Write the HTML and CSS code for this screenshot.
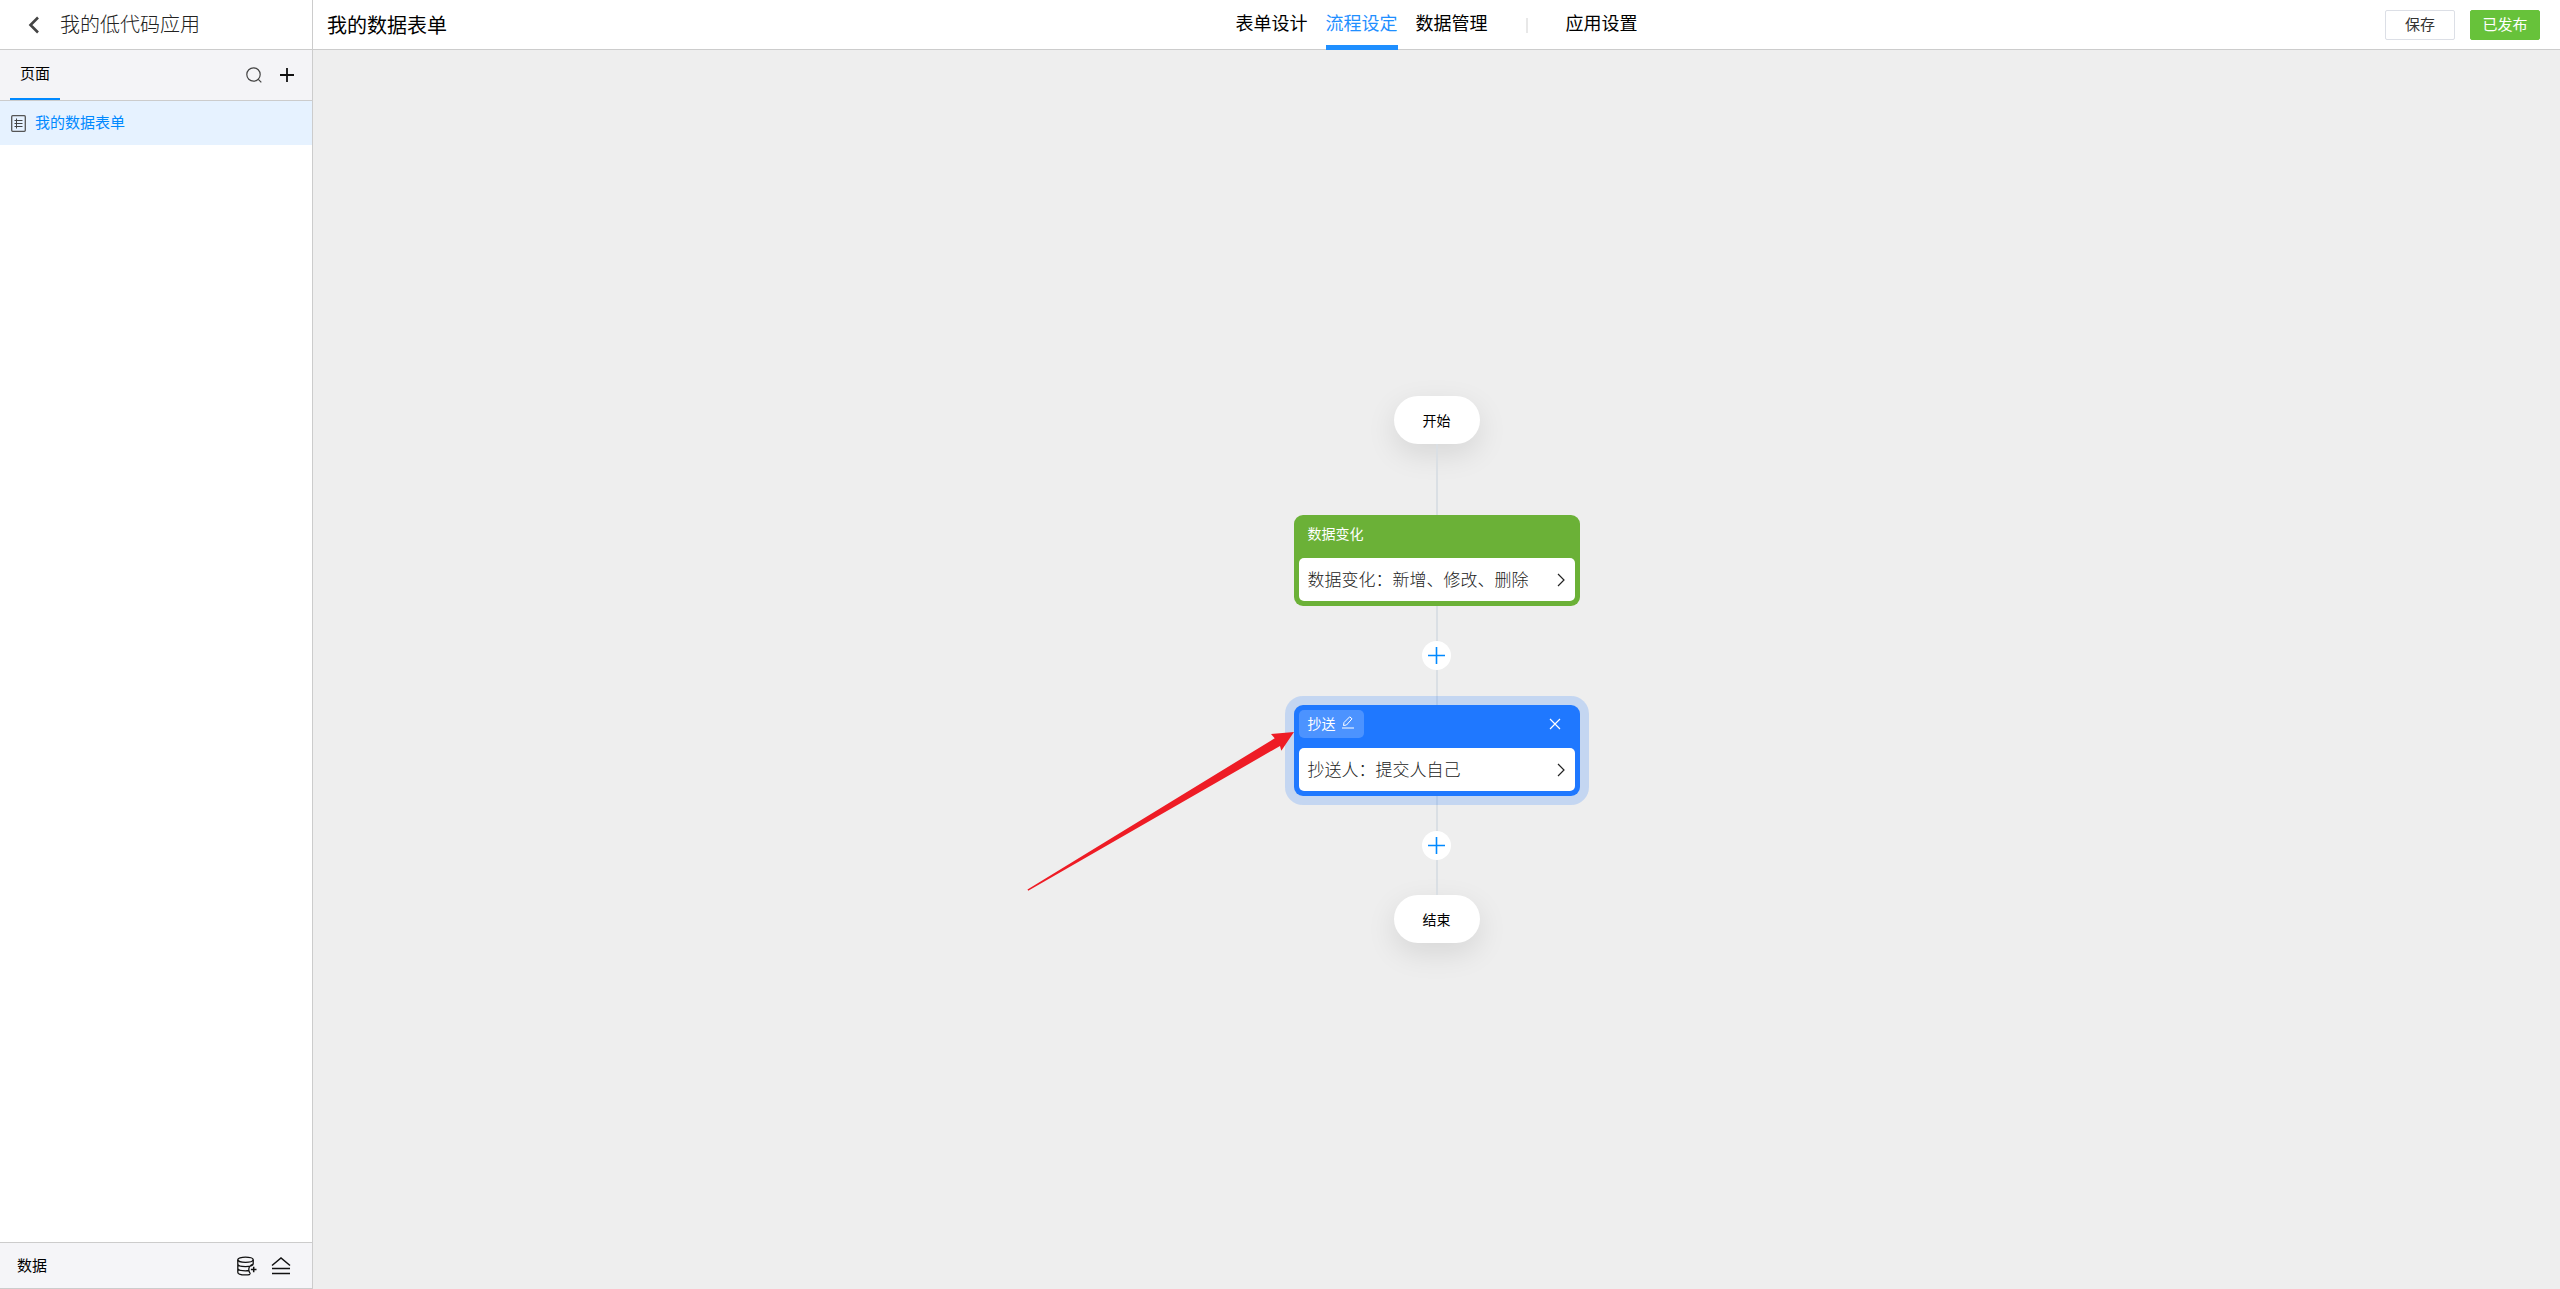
FILE: index.html
```html
<!DOCTYPE html>
<html lang="zh-CN">
<head>
    <meta charset="UTF-8">
    <title>我的低代码应用</title>
    <link rel="stylesheet" href="styles.css">
</head>
<body>
<div class="app">
    <aside class="sidebar">
        <div class="app-title">
            <button class="icon-btn" aria-label="返回">
                <svg width="16" height="18" viewBox="0 0 16 18"><path d="M12 1.500 4.500 9l7.500 7.500" stroke="#444" stroke-width="2.600"/></svg>
            </button>
            <span>我的低代码应用</span>
        </div>
        <div class="side-tabs">
            <a class="side-tab" href="#">页面</a>
            <div class="side-tools">
                <button class="icon-btn" aria-label="搜索">
                    <svg width="16" height="16" viewBox="0 0 16 16"><circle cx="7.500" cy="7.500" r="6.700" stroke="#444" stroke-width="1.200"/><path d="m12.300 12.300 3 3" stroke="#444" stroke-width="1.200"/></svg>
                </button>
                <button class="icon-btn" aria-label="新增">
                    <svg width="16" height="16" viewBox="0 0 16 16"><path d="M8 1v14M1 8h14" stroke="#111" stroke-width="1.800"/></svg>
                </button>
            </div>
        </div>
        <a class="page-item" href="#">
            <svg width="15" height="17" viewBox="0 0 15 17"><rect x=".7" y=".7" width="13.600" height="15.600" rx="1" stroke="#555" stroke-width="1.300"/><path d="M5.500 3.500v10M3.500 5.500h8M3.500 8.500h8M3.500 11.500h8" stroke="#444"/></svg>
            <span class="label">我的数据表单</span>
        </a>
        <div class="data-bar">
            <span class="label">数据</span>
            <div class="side-tools">
                <button class="icon-btn" aria-label="新增数据源">
                    <svg width="20" height="20" viewBox="0 0 20 20"><g stroke="#111" stroke-width="1.300"><ellipse cx="8.500" cy="3.800" rx="7.700" ry="2.600"/><path d="M.8 3.800v12.400c0 1.500 3.400 2.700 7.700 2.700 1.800 0 3.400-.2 4.700-.6M.8 8c0 1.500 3.400 2.600 7.700 2.600s7.700-1.100 7.700-2.600V3.800M.8 12.200c0 1.500 3.400 2.600 7.700 2.600 1.200 0 2.300-.1 3.300-.3M16.200 8c-3 1.200-4.400 3-4.400 5.300 0 2 .6 3.400 1.600 4.600"/></g><path d="M16.700 10.700v5.600M13.900 13.500h5.600" stroke="#111" stroke-width="1.500"/></svg>
                </button>
                <button class="icon-btn" aria-label="展开">
                    <svg width="20" height="20" viewBox="0 0 20 20"><path d="m1 9.500 9-7.500 9 7.500M1 12.500h18M1 17.500h18" stroke="#111" stroke-width="1.500"/></svg>
                </button>
            </div>
        </div>
    </aside>

    <main class="main">
        <header class="topbar">
            <h1>我的数据表单</h1>
            <nav class="nav">
                <a href="#">表单设计</a>
                <a class="active" href="#">流程设定</a>
                <a href="#">数据管理</a>
                <i class="divider"></i>
                <a href="#">应用设置</a>
            </nav>
            <div class="actions">
                <button class="btn">保存</button>
                <button class="btn btn-success">已发布</button>
            </div>
        </header>

        <section class="flow">
            <div class="terminal">开始</div>
            <div class="line line-long"></div>
            <div class="node node-trigger">
                <div class="node-head"><span class="node-name label">数据变化</span></div>
                <button class="node-body">
                    <span class="label">数据变化：新增、修改、删除</span>
                    <svg width="8" height="14" viewBox="0 0 8 14"><path d="m1 1 6 6-6 6" stroke="#222" stroke-width="1.200"/></svg>
                </button>
            </div>
            <div class="line"></div>
            <button class="add" aria-label="添加节点">
                <svg width="17" height="17" viewBox="0 0 17 17"><path d="M8.500 0v17M0 8.500h17" stroke="#0089ff" stroke-width="1.600"/></svg>
            </button>
            <div class="line"></div>
            <div class="node node-copy">
                <div class="node-head">
                    <button class="node-name editable">
                        <span>抄送</span>
                        <svg width="12" height="13" viewBox="0 0 12 13"><path d="m1.500 9.500.5-3L7.700.800l2.300 2L4.500 9z" stroke="#fff"/><path d="M0 12h12" stroke="#fff"/></svg>
                    </button>
                    <button class="icon-btn" aria-label="删除">
                        <svg width="12" height="12" viewBox="0 0 12 12"><path d="m1 1 10 10M11 1 1 11" stroke="#fff" stroke-width="1.200"/></svg>
                    </button>
                </div>
                <button class="node-body">
                    <span class="label">抄送人：提交人自己</span>
                    <svg width="8" height="14" viewBox="0 0 8 14"><path d="m1 1 6 6-6 6" stroke="#222" stroke-width="1.200"/></svg>
                </button>
                <svg class="pointer" width="268" height="160" viewBox="0 0 268 160"><path d="M.500 158.500 247.700 7.300 244 3l23-2-12.700 18.700-1.300-4.700L1.200 159.800z" fill="#ee1c25"/></svg>
            </div>
            <div class="line"></div>
            <button class="add" aria-label="添加节点">
                <svg width="17" height="17" viewBox="0 0 17 17"><path d="M8.500 0v17M0 8.500h17" stroke="#0089ff" stroke-width="1.600"/></svg>
            </button>
            <div class="line"></div>
            <div class="terminal">结束</div>
        </section>
    </main>
</div>
</body>
</html>
```
FILE: styles.css
```css
* {
    box-sizing: border-box;
}

body {
    margin: 0;
    font-family: "Noto Sans CJK SC", sans-serif;
    font-size: 15px;
    color: #000;
}

a {
    color: inherit;
    text-decoration: none;
}

button {
    font: inherit;
    color: inherit;
    cursor: pointer;
}

svg {
    display: block;
    fill: none;
}

.icon-btn {
    padding: 0;
    border: none;
    background: none;
}

/* the CJK face sits low in its line box */
.label {
    padding-bottom: 3px;
}

.app {
    display: flex;
    min-height: 100vh;
}

/* Left column */
.sidebar {
    display: flex;
    flex-direction: column;
    width: 313px;
    flex: none;
    border-right: 1px solid #ccc;
}

.app-title {
    display: flex;
    align-items: center;
    gap: 18px;
    height: 50px;
    padding-left: 26px;
    border-bottom: 1px solid #ccc;
    font-size: 20px;
    font-weight: 300;
    line-height: 46px;
    color: #222;
}

.app-title span {
    padding-bottom: 2px;
}

.side-tabs {
    display: flex;
    justify-content: space-between;
    height: 51px;
    padding: 0 17px 0 10px;
    background: #f4f4f7;
    border-bottom: 1px solid #ccc;
}

.side-tab {
    padding: 0 10px;
    line-height: 46px;
    border-bottom: 2px solid #0089ff;
}

.side-tools {
    display: flex;
    align-items: center;
    gap: 17px;
}

.page-item {
    display: flex;
    align-items: center;
    gap: 9px;
    height: 44px;
    padding-left: 11px;
    background: #e6f2ff;
    color: #0089ff;
}

.data-bar {
    display: flex;
    align-items: center;
    justify-content: space-between;
    height: 47px;
    margin-top: auto;
    padding: 0 21px 0 17px;
    background: #f5f5f8;
    border-top: 1px solid #ccc;
    border-bottom: 1px solid #ccc;
}

.data-bar .side-tools {
    gap: 14px;
}

/* Right column */
.main {
    display: flex;
    flex-direction: column;
    flex: 1;
}

.topbar {
    display: grid;
    grid-template-columns: 1fr auto 1fr;
    align-items: center;
    height: 50px;
    border-bottom: 1px solid #ccc;
}

.topbar h1 {
    margin: 0;
    padding: 0 0 2px 14px;
    font-size: 20px;
    font-weight: 400;
}

.nav {
    display: flex;
    align-items: center;
    gap: 18px;
    font-size: 18px;
}

.nav a {
    height: 50px;
    line-height: 44px;
}

.nav .active {
    color: #1f8fff;
    border-bottom: 5px solid #1f8fff;
}

.divider {
    width: 2px;
    height: 15px;
    margin: 0 20px;
    background: #e8e8e8;
}

.actions {
    display: flex;
    justify-content: flex-end;
    gap: 15px;
    padding-right: 20px;
}

.btn {
    width: 70px;
    height: 30px;
    padding: 0 0 2px;
    border: 1px solid #dcdfe6;
    border-radius: 2px;
    background: #fff;
    line-height: 24px;
    color: #333;
}

.btn-success {
    background: #67c23a;
    border-color: #67c23a;
    color: #fff;
}

/* Flow chart */
.flow {
    display: flex;
    flex-direction: column;
    align-items: center;
    justify-content: center;
    flex: 1;
    background: #eee;
    font-size: 14px;
}

.terminal {
    width: 86px;
    line-height: 48px;
    border-radius: 24px;
    background: #fff;
    text-align: center;
    box-shadow: 0 10px 30px rgba(0, 0, 0, .1);
}

.line {
    position: relative;
    width: 2px;
    height: 35px;
    background: #dadfe4;
}

.line-long {
    height: 71px;
}

.add {
    display: flex;
    align-items: center;
    justify-content: center;
    width: 29px;
    height: 29px;
    padding: 0;
    border: none;
    border-radius: 50%;
    background: #fff;
}

.node {
    position: relative;
    z-index: 1;
    width: 286px;
    padding: 5px;
    border-radius: 9px;
}

.node-trigger {
    background: #6bb137;
}

.node-copy {
    background: #1f78ff;
    box-shadow: 0 0 0 9px rgba(31, 120, 255, .2);
}

.node-head {
    display: flex;
    align-items: center;
    justify-content: space-between;
    height: 28px;
    margin-bottom: 10px;
    padding-right: 14px;
    color: #fff;
}

.node-name {
    padding-left: 9px;
}

.editable {
    display: flex;
    align-items: center;
    gap: 6px;
    height: 28px;
    padding: 0 10px 3px 9px;
    border: none;
    border-radius: 5px;
    background: #4c93ff;
}

.node-body {
    display: flex;
    align-items: center;
    justify-content: space-between;
    width: 100%;
    height: 43px;
    padding: 0 10px 0 9px;
    border: none;
    border-radius: 5px;
    background: #fff;
    font-size: 17px;
    font-weight: 300;
    color: #222;
}

.pointer {
    position: absolute;
    top: 26px;
    right: 285px;
}
```
